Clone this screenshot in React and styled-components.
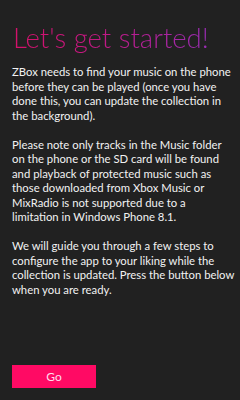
import styled, { createGlobalStyle } from "styled-components";

const Global = createGlobalStyle`
  html, body {
    margin: 0;
    padding: 0;
    background: #212121;
  }
`

const Page = styled.div`
  width: 240px;
  height: 400px;
  box-sizing: border-box;
  padding: 22px 5px 0 12px;
  display: flex;
  flex-direction: column;
  background: #212121;
  font-family: Lato, "Open Sans", sans-serif;
  color: #f2f2f2;
`

const Title = styled.h1`
  margin: 0 0 0 1px;
  font-size: 27.5px;
  font-weight: 300;
  line-height: 32px;
  white-space: nowrap;
  background: linear-gradient(90deg, #d4116a 0%, #bf1a88 50%, #982db2 100%);
  -webkit-background-clip: text;
  background-clip: text;
  color: transparent;
  width: max-content;
`

const Body = styled.div`
  margin-top: 11px;
  display: flex;
  flex-direction: column;
  gap: 14.5px;
`

const Para = styled.p`
  margin: 0;
  font-size: 11.3px;
  line-height: 14.5px;
`

const GoButton = styled.button`
  margin-top: auto;
  margin-bottom: 12px;
  width: 84px;
  height: 23px;
  border: none;
  background: #ff0a64;
  color: #fde;
  font-family: inherit;
  font-size: 12px;
  padding: 0;
`

export default function App() {
  return (
    <Page>
      <Global />
      <Title>Let's get started!</Title>
      <Body>
        <Para>
          ZBox needs to find your music on the phone before they can be played (once you have
          done this, you can update the collection in the{"\u00A0"}background).
        </Para>
        <Para>
          Please note only tracks in the Music folder on the phone or the SD card will be found
          and playback of protected music such as those downloaded from Xbox Music or
          MixRadio is not supported due to a limitation in Windows Phone 8.1.
        </Para>
        <Para>
          We will guide you through a few steps to configure the app to your liking while the
          collection is updated. Press the button below when you are ready.
        </Para>
      </Body>
      <GoButton>Go</GoButton>
    </Page>
  );
}
